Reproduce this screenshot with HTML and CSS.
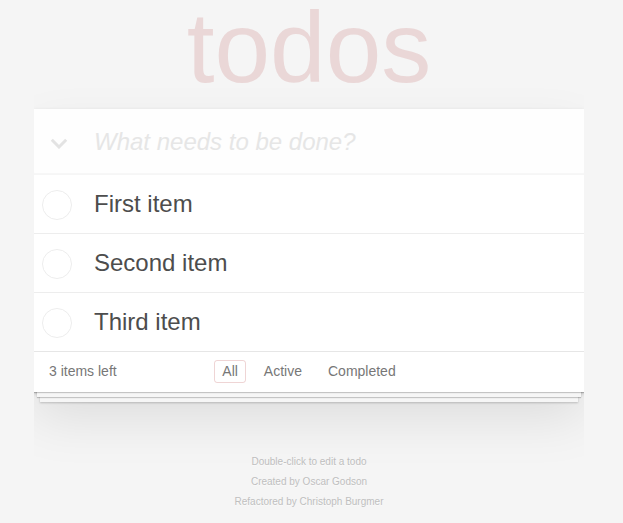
FILE: index.html
```
<!DOCTYPE html>
<html lang="en">
<head>
<meta charset="utf-8">
<title>Todos</title>
<link rel="stylesheet" href="styles.css">
</head>
<body>
<section class="todoapp">
  <h1 class="title">todos</h1>
  <div class="panel">
    <div class="header">
      <span class="toggle-all">
        <svg width="18" height="11" viewBox="0 0 18 11"><polyline points="1.8,1.8 9,9 16.2,1.8" fill="none" stroke="#e3e3e3" stroke-width="3"/></svg>
      </span>
      <input class="new-todo" placeholder="What needs to be done?">
    </div>
    <ul class="todo-list">
      <li class="todo">
        <span class="toggle"><svg width="30" height="30" viewBox="0 0 30 30"><circle cx="15" cy="15" r="14.5" fill="none" stroke="#ededed" stroke-width="1"/></svg></span>
        <label class="todo-label">First item</label>
      </li>
      <li class="todo">
        <span class="toggle"><svg width="30" height="30" viewBox="0 0 30 30"><circle cx="15" cy="15" r="14.5" fill="none" stroke="#ededed" stroke-width="1"/></svg></span>
        <label class="todo-label">Second item</label>
      </li>
      <li class="todo">
        <span class="toggle"><svg width="30" height="30" viewBox="0 0 30 30"><circle cx="15" cy="15" r="14.5" fill="none" stroke="#ededed" stroke-width="1"/></svg></span>
        <label class="todo-label">Third item</label>
      </li>
    </ul>
    <footer class="footer">
      <span class="todo-count">3 items left</span>
      <ul class="filters">
        <li><a class="filter selected">All</a></li>
        <li><a class="filter">Active</a></li>
        <li><a class="filter">Completed</a></li>
      </ul>
      <span class="spacer"></span>
    </footer>
  </div>
</section>
<footer class="info">
  <p>Double-click to edit a todo</p>
  <p>Created by Oscar Godson</p>
  <p>Refactored by Christoph Burgmer</p>
</footer>
</body>
</html>
```
FILE: styles.css
```
html, body {
  margin: 0;
  padding: 0;
}
body {
  font: 14px "Liberation Sans", Arial, Helvetica, sans-serif;
  line-height: 1.4em;
  background: #f5f5f5;
  color: #4d4d4d;
  width: 550px;
  margin: 0 0 0 34px;
}
.todoapp {
  margin: 0;
}
.title {
  margin: 0 0 14px 0;
  font-size: 100px;
  line-height: 95px;
  font-weight: 100;
  text-align: center;
  color: rgba(175, 47, 47, 0.15);
}
.panel {
  background: #fff;
  position: relative;
  box-shadow: 0 2px 4px 0 rgba(0, 0, 0, 0.2), 0 25px 50px 0 rgba(0, 0, 0, 0.1);
}
.header {
  display: flex;
  align-items: center;
  height: 66px;
  background: rgba(0, 0, 0, 0.003);
  box-shadow: inset 0 -2px 1px rgba(0, 0, 0, 0.03);
}
.toggle-all {
  width: 60px;
  display: flex;
  padding-left: 16px;
  box-sizing: border-box;
  padding-top: 3px;
}
.toggle-all svg {
  display: block;
}
.new-todo {
  flex: 1;
  border: none;
  outline: none;
  background: transparent;
  font-family: "Liberation Sans", Arial, sans-serif;
  font-size: 24px;
  line-height: 34px;
  padding: 16px 16px 16px 0;
  color: #4d4d4d;
}
.new-todo::placeholder {
  font-style: italic;
  color: #e6e6e6;
}
.todo-list {
  list-style: none;
  margin: 0;
  padding: 0;
}
.todo {
  display: flex;
  align-items: center;
  border-bottom: 1px solid #ededed;
  font-size: 24px;
}
.todo:last-child {
  border-bottom: none;
}
.toggle {
  display: flex;
  width: 30px;
  height: 30px;
  margin: 1px 22px 0 8px;
}
.todo-label {
  flex: 1;
  padding: 15px 15px 15px 0;
  line-height: 28px;
  color: #4d4d4d;
}
.footer {
  position: relative;
  display: grid;
  grid-template-columns: 1fr auto 1fr;
  align-items: center;
  height: 40px;
  padding: 0 15px;
  border-top: 1px solid #e6e6e6;
  color: #777;
}
.footer::before {
  content: "";
  position: absolute;
  right: 0;
  bottom: 0;
  left: 0;
  height: 50px;
  overflow: hidden;
  box-shadow: 0 1px 1px rgba(0, 0, 0, 0.2),
              0 8px 0 -3px #f6f6f6,
              0 9px 1px -3px rgba(0, 0, 0, 0.2),
              0 16px 0 -6px #f6f6f6,
              0 17px 2px -6px rgba(0, 0, 0, 0.2);
}
.todo-count {
  position: relative;
  margin-top: -1px;
}
.filters {
  position: relative;
  list-style: none;
  margin: -2px 0 0 0;
  padding: 0;
  display: flex;
  gap: 4px;
}
.filter {
  display: block;
  margin: 0 3px;
  padding: 3px 7px;
  line-height: 15px;
  border: 1px solid transparent;
  border-radius: 3px;
  color: inherit;
}
.filter.selected {
  border-color: rgba(175, 47, 47, 0.2);
}
.info {
  margin-top: 65px;
  display: flex;
  flex-direction: column;
  gap: 10px;
  color: #bfbfbf;
  font-size: 10px;
  text-shadow: 0 1px 0 rgba(255, 255, 255, 0.5);
  text-align: center;
}
.info p {
  margin: 0;
  line-height: 1;
}
```
